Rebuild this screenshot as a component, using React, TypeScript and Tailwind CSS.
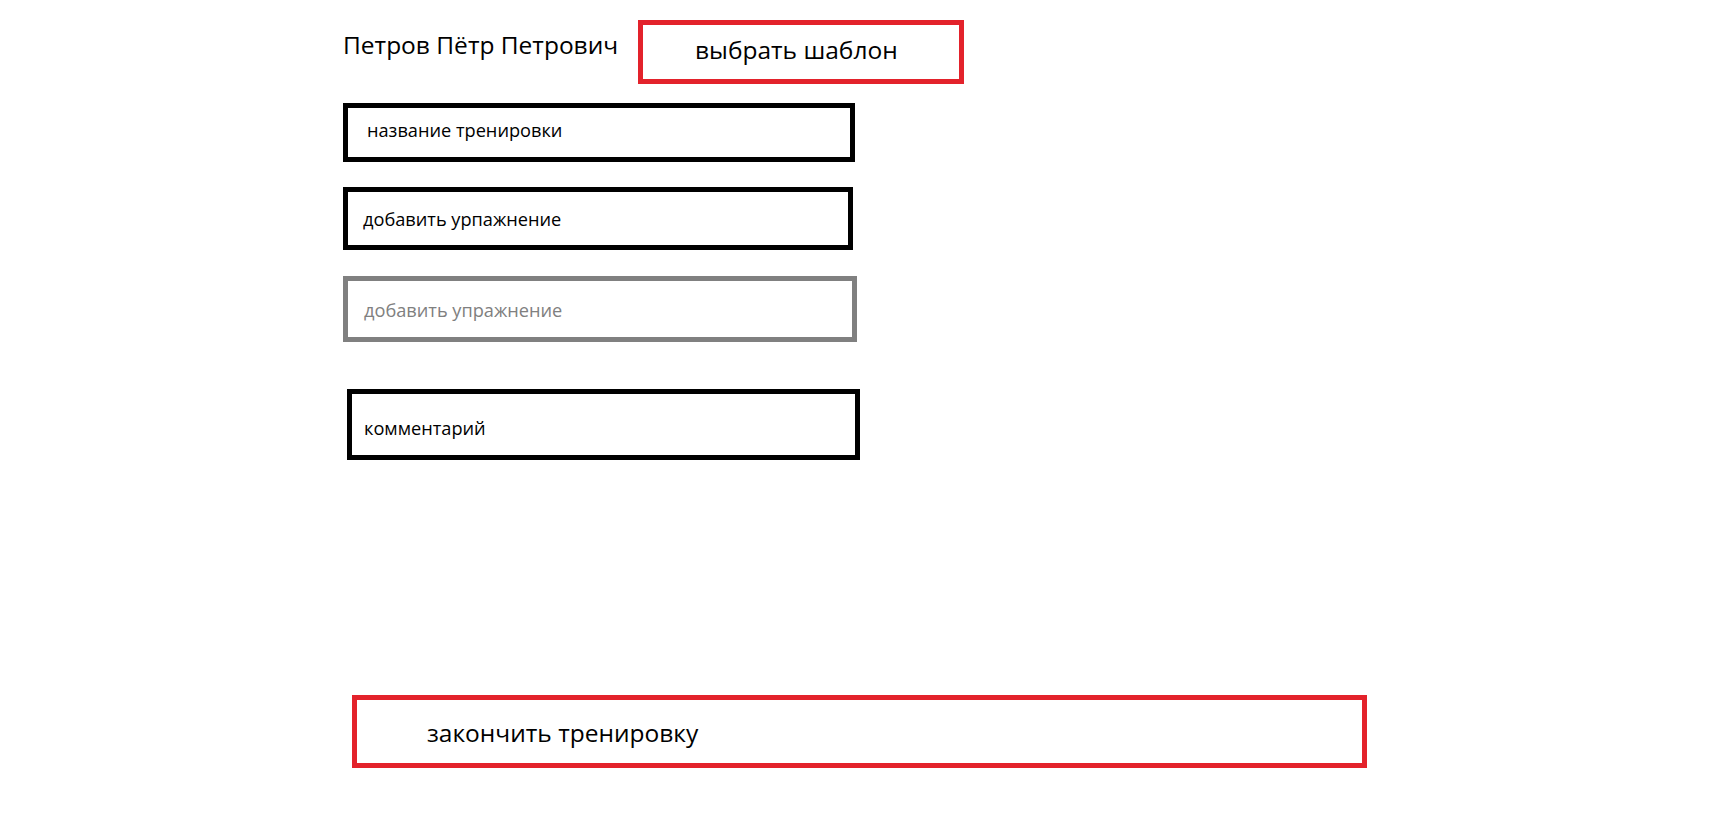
import React from "react";

export default function App() {
  const font = { fontFamily: '"Open Sans", "Noto Sans", sans-serif' };
  return (
    <div
      className="min-h-[815px] w-full bg-white pl-[343px] pt-[20px] text-black"
      style={font}
    >
      <div className="flex items-start">
        <div className="w-[295px] pt-[9px] text-[24.5px] leading-[32px]">
          Петров Пётр Петрович
        </div>
        <button className="flex h-[64px] w-[326px] items-center border-[5px] border-[#e3222b] pl-[52px] pb-[5px] text-[24.5px] leading-[32px]">
          выбрать шаблон
        </button>
      </div>

      <div className="mt-[19px] flex h-[59px] w-[512px] items-center border-[5px] border-black pl-[19px] pb-[3px] text-[18.2px]">
        название тренировки
      </div>

      <div className="mt-[25px] flex h-[63px] w-[510px] items-center border-[5px] border-black pl-[15px] pt-[2px] text-[18.2px]">
        добавить урпажнение
      </div>

      <div className="mt-[26px] flex h-[66px] w-[514px] items-center border-[5px] border-[#808080] pl-[16px] pt-[4px] text-[18.2px] text-[#808080]">
        добавить упражнение
      </div>

      <div className="ml-[4px] mt-[47px] flex h-[71px] w-[513px] items-center border-[5px] border-black pl-[12px] pt-[8px] text-[18.2px]">
        комментарий
      </div>

      <button className="ml-[9px] mt-[235px] flex h-[73px] w-[1015px] items-center border-[5px] border-[#e3222b] pl-[70px] pt-[3px] text-[24.5px]">
        закончить тренировку
      </button>
    </div>
  );
}
